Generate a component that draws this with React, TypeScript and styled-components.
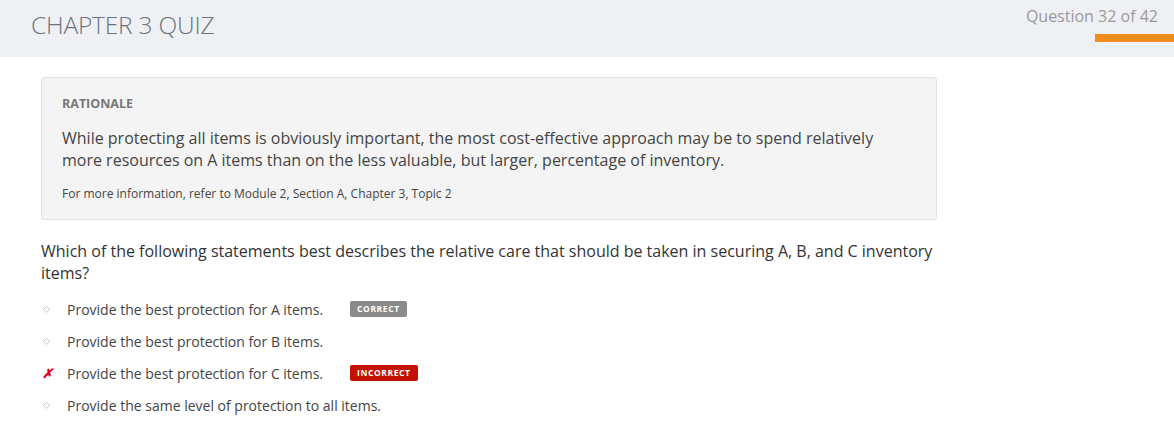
import React from "react";
import styled, { createGlobalStyle } from "styled-components";

const GlobalStyle = createGlobalStyle`
  body {
    margin: 0;
    background: #ffffff;
    font-family: "Open Sans", "Liberation Sans", sans-serif;
  }
`;

const Header = styled.div`
  display: flex;
  justify-content: space-between;
  align-items: flex-start;
  height: 57px;
  background: #eff0f4;
  padding-left: 31px;
`;

const Title = styled.h1`
  margin: 8px 0 0;
  font-size: 24.5px;
  font-weight: 300;
  color: #6a7480;
  letter-spacing: -0.2px;
`;

const Progress = styled.div`
  display: flex;
  flex-direction: column;
  align-items: flex-end;
`;

const Counter = styled.div`
  margin: 5px 16px 0 0;
  font-size: 16px;
  color: #9a9a9a;
`;

const Bar = styled.div`
  margin-top: 7px;
  width: 79px;
  height: 8px;
  background: #f28c1e;
`;

const Content = styled.div`
  padding: 20px 0 0 41px;
  width: 896px;
`;

const Rationale = styled.div`
  background: #f4f4f4;
  border: 1px solid #e2e2e2;
  border-radius: 3px;
  padding: 17px 20px 17px;
`;

const Label = styled.div`
  font-size: 12.5px;
  font-weight: 700;
  color: #777;
`;

const Explanation = styled.p`
  margin: 15px 0 0;
  font-size: 16px;
  line-height: 22px;
  color: #444;
`;

const Reference = styled.p`
  margin: 14px 0 0;
  font-size: 12px;
  color: #444;
`;

const Question = styled.p`
  margin: 20px 0 0;
  font-size: 16px;
  line-height: 22px;
  color: #333;
`;

const Options = styled.ul`
  list-style: none;
  margin: 9px 0 0;
  padding: 0;
`;

const Option = styled.li`
  display: flex;
  align-items: center;
  height: 32px;
`;

const Marker = styled.span`
  width: 26px;
  flex-shrink: 0;
  display: flex;
  justify-content: flex-start;
  padding-left: 1px;
  box-sizing: border-box;
  color: #e0001b;
  font-size: 13px;
  font-weight: 700;
  font-style: italic;
`;

const Text = styled.span`
  min-width: 283px;
  white-space: nowrap;
  font-size: 14px;
  color: #444;
`;

const Badge = styled.span<{ $tone: "correct" | "incorrect" }>`
  background: ${(p) => (p.$tone === "correct" ? "#8a8a8a" : "#c41200")};
  color: #fff;
  font-size: 8.5px;
  font-weight: 700;
  letter-spacing: 0.6px;
  padding: 2px 7px;
  border-radius: 2px;
  line-height: 12px;
`;

const Diamond = () => (
  <svg width="7" height="7" viewBox="0 0 7 7" style={{ marginLeft: 1 }}>
    <path d="M3.5 0.5 L6.5 3.5 L3.5 6.5 L0.5 3.5 Z" fill="none" stroke="#c8c8c8" strokeWidth="1" />
  </svg>
);

const options = [
  { text: "Provide the best protection for A items.", badge: "correct" as const },
  { text: "Provide the best protection for B items." },
  { text: "Provide the best protection for C items.", badge: "incorrect" as const, wrong: true },
  { text: "Provide the same level of protection to all items." },
];

const App: React.FC = () => (
  <>
    <GlobalStyle />
    <Header>
      <Title>CHAPTER 3 QUIZ</Title>
      <Progress>
        <Counter>Question 32 of 42</Counter>
        <Bar />
      </Progress>
    </Header>
    <Content>
      <Rationale>
        <Label>RATIONALE</Label>
        <Explanation>
          While protecting all items is obviously important, the most cost-effective approach may be to spend relatively
          more resources on A items than on the less valuable, but larger, percentage of inventory.
        </Explanation>
        <Reference>For more information, refer to Module 2, Section A, Chapter 3, Topic 2</Reference>
      </Rationale>
      <Question>
        Which of the following statements best describes the relative care that should be taken in securing A, B, and C
        inventory items?
      </Question>
      <Options>
        {options.map((o) => (
          <Option key={o.text}>
            <Marker>{o.wrong ? "✗" : <Diamond />}</Marker>
            <Text>{o.text}</Text>
            {o.badge && <Badge $tone={o.badge}>{o.badge.toUpperCase()}</Badge>}
          </Option>
        ))}
      </Options>
    </Content>
  </>
);

export default App;
